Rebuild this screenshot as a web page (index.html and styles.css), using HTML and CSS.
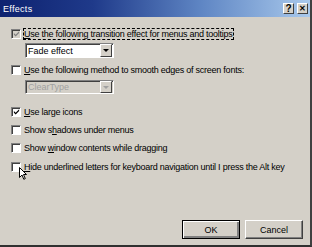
FILE: index.html
```html
<!DOCTYPE html>
<html lang="en">
<head>
  <meta charset="UTF-8">
  <title>Effects</title>
  <link rel="stylesheet" href="styles.css">
</head>
<body>
  <div class="window">
    <div class="titlebar">
      <span class="title">Effects</span>
      <div class="caption-btns">
        <span class="cap-btn">?</span>
        <span class="cap-btn x">&#x2715;</span>
      </div>
    </div>

    <div class="content">
      <div class="row r1">
        <span class="box disabled checked"><svg viewBox="0 0 8 8"><path d="M1 3.5 L3 5.5 L7 1.5 L7 3.5 L3 7.5 L1 5.5 Z"/></svg></span>
        <span class="label focus"><u>U</u>se the following transition effect for menus and tooltips</span>
      </div>
      <div class="combo c1">
        <span class="combo-text">Fade effect</span>
        <span class="combo-arrow"></span>
      </div>

      <div class="row r2">
        <span class="box"></span>
        <span class="label"><u>U</u>se the following method to smooth edges of screen fonts:</span>
      </div>
      <div class="combo c2 off">
        <span class="combo-text">ClearType</span>
        <span class="combo-arrow"></span>
      </div>

      <div class="row r3">
        <span class="box checked"><svg viewBox="0 0 8 8"><path d="M1 3.5 L3 5.5 L7 1.5 L7 3.5 L3 7.5 L1 5.5 Z"/></svg></span>
        <span class="label"><u>U</u>se large icons</span>
      </div>
      <div class="row r4">
        <span class="box"></span>
        <span class="label">Show s<u>h</u>adows under menus</span>
      </div>
      <div class="row r5">
        <span class="box"></span>
        <span class="label">Show <u>w</u>indow contents while dragging</span>
      </div>
      <div class="row r6">
        <span class="box"></span>
        <span class="label"><u>H</u>ide underlined letters for keyboard navigation until I press the Alt key</span>
        <svg class="cursor" viewBox="0 0 8 13" width="8" height="13"><path d="M0.5 0.5 L0.5 10.5 L3 8 L4.8 12.3 L6.3 11.6 L4.5 7.5 L7.5 7.5 Z" fill="#fff" stroke="#000" stroke-width="1"/></svg>
      </div>

      <div class="buttons">
        <span class="btn default">OK</span>
        <span class="btn">Cancel</span>
      </div>
    </div>
  </div>
</body>
</html>
```

FILE: styles.css
```css
body { margin: 0; background: #d4d0c8; font-family: 'Liberation Sans', Arial, sans-serif; font-size: 9px; color: #000; }
.window { width: 312px; height: 247px; box-sizing: border-box; background: #d4d0c8; border-right: 2px solid #404040; border-bottom: 2px solid #303030; display: flex; flex-direction: column; overflow: hidden; }
.titlebar { height: 17px; flex: none; display: flex; align-items: center; padding-left: 3px; background: linear-gradient(to right, #0e2270 0%, #1f3a8a 30%, #5f86c4 65%, #a9c9ec 100%); }
.title { color: #fff; font-size: 9px; letter-spacing: 0.3px; }
.caption-btns { margin-left: auto; display: flex; gap: 3px; padding-right: 2px; }
.cap-btn { width: 11px; height: 11px; box-sizing: border-box; background: #d4d0c8; border: 1px solid; border-color: #fff #404040 #404040 #fff; font-weight: bold; font-size: 10px; line-height: 9px; text-align: center; }
.cap-btn.x { font-size: 8px; }
.content { flex: 1; display: flex; flex-direction: column; padding: 0 7px 6px 11px; position: relative; }
.row { display: flex; align-items: center; height: 11px; position: relative; }
.r1 { margin-top: 11px; }
.r2 { margin-top: 6px; }
.r3 { margin-top: 12px; }
.r4 { margin-top: 7px; }
.r5 { margin-top: 7px; }
.r6 { margin-top: 8px; }
.box { width: 10px; height: 10px; box-sizing: border-box; flex: none; background: #fff; border: 1px solid; border-color: #808080 #fff #fff #808080; box-shadow: inset 1px 1px #404040; display: flex; align-items: center; justify-content: center; }
.box svg { width: 7px; height: 7px; display: none; }
.box.checked svg { display: block; fill: #000; }
.box.disabled { background: #d4d0c8; }
.box.disabled svg { fill: #808080; }
.label { margin-left: 3px; white-space: nowrap; line-height: 10px; letter-spacing: -0.25px; }
.label.focus { outline: 1px dashed #000; outline-offset: 0; padding-right: 1px; }
.combo { width: 89px; height: 15px; box-sizing: border-box; margin-left: 14px; background: #fff; border: 1px solid; border-color: #808080 #fff #fff #808080; box-shadow: inset 1px 1px #404040; display: flex; align-items: center; }
.c1 { margin-top: 4px; }
.c2 { margin-top: 5px; height: 14px; background: #d4d0c8; }
.combo-text { padding-left: 2px; flex: 1; }
.off .combo-text { color: #a0a0a0; }
.combo-arrow { width: 12px; height: 100%; box-sizing: border-box; background: #d4d0c8; border: 1px solid; border-color: #fff #404040 #404040 #fff; position: relative; margin-right: 1px; }
.combo-arrow::after { content: ""; position: absolute; left: 2px; top: 4px; border-left: 3px solid transparent; border-right: 3px solid transparent; border-top: 3px solid #000; }
.off .combo-arrow::after { border-top-color: #a0a0a0; }
.cursor { position: absolute; left: 8px; top: 6px; }
.buttons { margin-top: auto; display: flex; justify-content: flex-end; gap: 5px; }
.btn { width: 58px; height: 19px; box-sizing: border-box; border: 1px solid; border-color: #fff #404040 #404040 #fff; box-shadow: inset -1px -1px #808080; display: flex; align-items: center; justify-content: center; }
.btn.default { border: 1px solid #000; box-shadow: inset 1px 1px #fff, inset -2px -2px #808080; }
```
